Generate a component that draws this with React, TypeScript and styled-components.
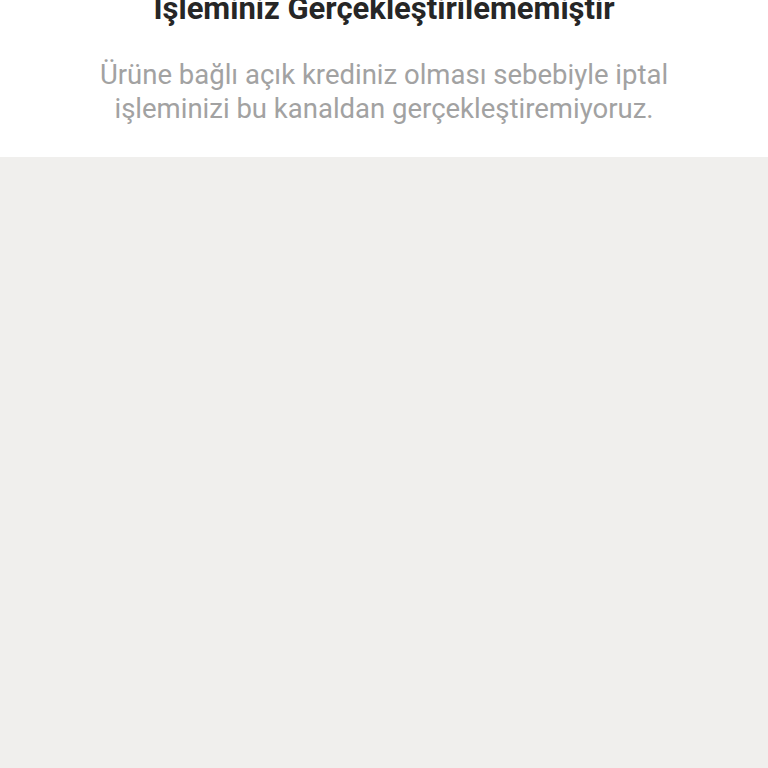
import styled, { createGlobalStyle } from 'styled-components';

const GlobalStyle = createGlobalStyle`
  html, body {
    margin: 0;
    padding: 0;
    background: #f0efed;
    font-family: Roboto, "Noto Sans", Arial, sans-serif;
  }
`;

const Page = styled.main`
  min-height: 100vh;
  overflow: hidden;
  background: #f0efed;
`;

const ResultPanel = styled.section`
  margin-top: -9px;
  padding: 0 16px 31px;
  background: #ffffff;
  text-align: center;
`;

const Title = styled.h1`
  margin: 0;
  font-size: 31px;
  line-height: 36px;
  font-weight: 700;
  color: #262626;
`;

const Message = styled.p`
  margin: 31px auto 0;
  font-size: 27.5px;
  line-height: 34px;
  font-weight: 400;
  color: #a2a2a2;
`;

const App = () => {
  return (
    <>
      <GlobalStyle />
      <Page>
        <ResultPanel>
          <Title>İşleminiz Gerçekleştirilememiştir</Title>
          <Message>
            Ürüne bağlı açık krediniz olması sebebiyle iptal
            <br />
            işleminizi bu kanaldan gerçekleştiremiyoruz.
          </Message>
        </ResultPanel>
      </Page>
    </>
  );
};

export default App;
